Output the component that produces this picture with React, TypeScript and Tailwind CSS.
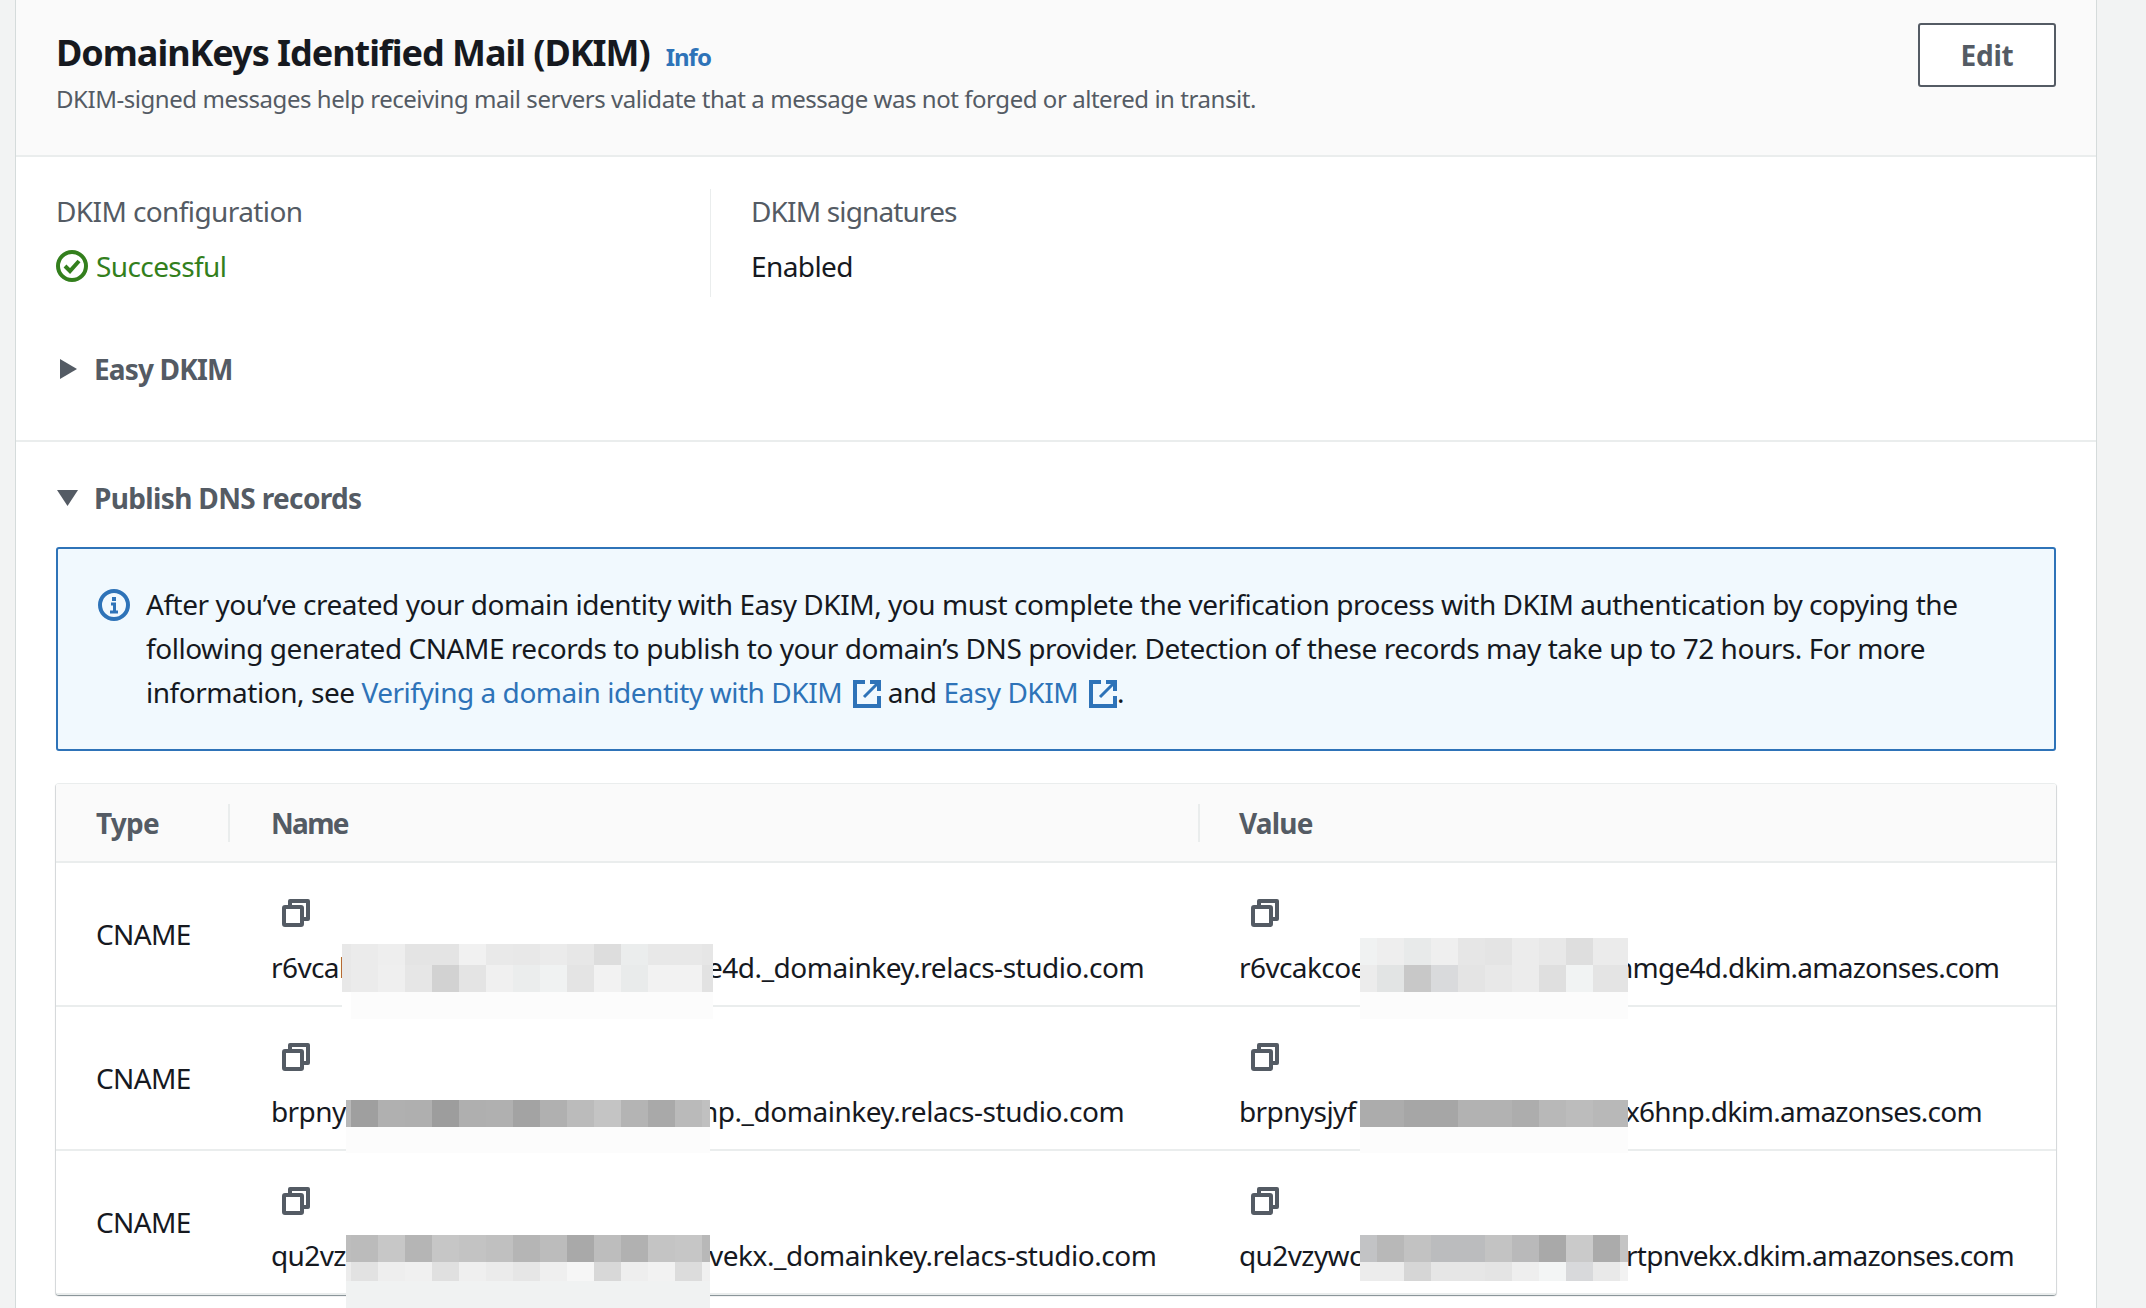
import { ReactNode } from 'react'

// Redacted strips laid over the record names, cell widths then colours per band
const NAME_W = [9, 27, 27, 27, 27, 27, 27, 27, 27, 27, 27, 27, 27, 27, 11]
const VALUE_W = [17, 27, 27, 27, 27, 27, 27, 27, 27, 27, 8]

interface Band {
  y: number
  h: number
  colors: string[]
}

interface MaskProps {
  x: number
  widths: number[]
  bands: Band[]
}

const MASKS: MaskProps[] = [
  {
    x: 342,
    widths: NAME_W,
    bands: [
      { y: 944, h: 21, colors: ['#e8e8e8', '#ebebeb', '#eeeeee', '#e4e4e4', '#e4e4e4', '#f1f1f1', '#e9e9e9', '#e8e8e8', '#ebebeb', '#e7e7e7', '#dddddd', '#ebeded', '#e8e8e8', '#e8e8e8', '#e6e6e6'] },
      { y: 965, h: 27, colors: ['#e8e8e8', '#ebebeb', '#efefef', '#e6e6e6', '#d2d2d2', '#e4e4e4', '#f0f0f0', '#ebeded', '#f0f2f2', '#e4e4e4', '#f2f2f2', '#e9ebeb', '#f2f2f2', '#f2f2f2', '#e2e2e2'] },
      { y: 992, h: 27, colors: ['#ffffff', '#fcfcfc', '#fcfcfc', '#fcfcfc', '#fcfcfc', '#fcfcfc', '#fcfcfc', '#fcfcfc', '#fcfcfc', '#fcfcfc', '#fcfcfc', '#fcfcfc', '#fcfcfc', '#fcfcfc', '#fcfcfc'] },
    ],
  },
  {
    x: 346,
    widths: [5, 27, 27, 27, 27, 27, 27, 27, 27, 27, 27, 27, 27, 27, 8],
    bands: [
      { y: 1100, h: 27, colors: ['#b8b8b8', '#9f9f9f', '#b0b0b0', '#afafaf', '#9d9d9d', '#afafaf', '#b0b0b0', '#a3a3a3', '#b0b0b0', '#bbbbbb', '#c4c4c4', '#b4b4b4', '#a9a9a9', '#bababa', '#c0c0c0'] },
      { y: 1127, h: 26, colors: Array(15).fill('#fcfcfc') },
    ],
  },
  {
    x: 346,
    widths: [5, 27, 27, 27, 27, 27, 27, 27, 27, 27, 27, 27, 27, 27, 8],
    bands: [
      { y: 1235, h: 27, colors: ['#bdbdbd', '#bbbbbb', '#c7c7c7', '#b5b5b5', '#c6c6c6', '#c3c3c3', '#c0c0c0', '#b5b5b5', '#bcbcbc', '#a9a9a9', '#bdbdbd', '#b1b1b1', '#c4c4c4', '#c6c6c6', '#b8b8b8'] },
      { y: 1262, h: 19, colors: ['#ececec', '#e2e2e2', '#eeeeee', '#f0f0f0', '#e0e0e0', '#efefef', '#ebebeb', '#e6e6e6', '#efefef', '#f6f6f6', '#d8d8d8', '#eeeeee', '#f2f2f2', '#dcdcdc', '#f0f0f0'] },
      { y: 1281, h: 27, colors: Array(15).fill('#f0f2f2') },
    ],
  },
  {
    x: 1360,
    widths: VALUE_W,
    bands: [
      { y: 938, h: 27, colors: ['#f0f2f2', '#eeeeee', '#e8eaea', '#efefef', '#e6e6e6', '#e4e4e4', '#ececec', '#e8e8e8', '#dedede', '#ebebeb', '#ebebeb'] },
      { y: 965, h: 27, colors: ['#ececec', '#e2e4e4', '#c8c8c8', '#d9dadc', '#e4e4e4', '#e8e8e8', '#ececec', '#dfdfdf', '#f1f3f3', '#e4e4e4', '#e4e4e4'] },
      { y: 992, h: 27, colors: Array(11).fill('#fcfcfc') },
    ],
  },
  {
    x: 1360,
    widths: VALUE_W,
    bands: [
      { y: 1100, h: 27, colors: ['#acacac', '#acacac', '#a6a6a6', '#a6a6a6', '#b2b2b2', '#b2b2b2', '#adadad', '#b8b8b8', '#bcbcbc', '#b8b8b8', '#b8b8b8'] },
      { y: 1127, h: 26, colors: Array(11).fill('#fcfcfc') },
    ],
  },
  {
    x: 1360,
    widths: VALUE_W,
    bands: [
      { y: 1235, h: 27, colors: ['#c2c3c5', '#b8b8b8', '#c2c2c2', '#bbbcbe', '#bbbcbe', '#c3c3c3', '#b9b9ba', '#a9a9a9', '#cacaca', '#ababab', '#c4c4c4'] },
      { y: 1262, h: 19, colors: ['#ececec', '#ececec', '#d6d6d6', '#e6e6e6', '#e6e6e6', '#e4e4e4', '#eeeeee', '#f3f5f5', '#d8d9db', '#e9e9e9', '#f2f2f2'] },
    ],
  },
]

const RECORDS = [
  {
    namePre: 'r6vcal',
    nameSuf: 'e4d._domainkey.relacs-studio.com',
    nameWidth: 'w-[436px]',
    valuePre: 'r6vcakcoe',
    valueSuf: 'nmge4d.dkim.amazonses.com',
    valueWidth: 'w-[377px]',
  },
  {
    namePre: 'brpnys',
    nameSuf: 'np._domainkey.relacs-studio.com',
    nameWidth: 'w-[430px]',
    valuePre: 'brpnysjyf',
    valueSuf: 'x6hnp.dkim.amazonses.com',
    valueWidth: 'w-[386px]',
  },
  {
    namePre: 'qu2vz',
    nameSuf: 'vekx._domainkey.relacs-studio.com',
    nameWidth: 'w-[438px]',
    valuePre: 'qu2vzywc',
    valueSuf: 'rtpnvekx.dkim.amazonses.com',
    valueWidth: 'w-[387px]',
  },
]

function Mask({ x, widths, bands }: MaskProps) {
  return (
    <>
      {bands.map((band) => (
        <div key={band.y} className="absolute flex" style={{ left: x, top: band.y, height: band.h }}>
          {band.colors.map((color, i) => (
            <div key={i} className="h-full" style={{ width: widths[i], backgroundColor: color }} />
          ))}
        </div>
      ))}
    </>
  )
}

function CopyIcon({ offset }: { offset: string }) {
  return (
    <svg className={offset} width="28" height="28" viewBox="0 0 28 28" fill="none" stroke="#545b64" strokeWidth="4" strokeLinejoin="round">
      <rect x="2" y="8" width="18" height="18" rx="1" />
      <path d="M8 7V2h18v18h-5" />
    </svg>
  )
}

function ExternalIcon() {
  return (
    <svg className="ml-[4px] inline-block align-[-5px]" width="28" height="28" viewBox="0 0 28 28" fill="none" stroke="#2e73b8" strokeWidth="4">
      <path d="M12 2H2v24h24V16" />
      <path d="M11 17 25 3" strokeWidth="3" />
      <path d="M17 2h9v9" />
    </svg>
  )
}

function Link({ children }: { children: ReactNode }) {
  return <span className="text-[#2e73b8]">{children}</span>
}

interface RecordCellProps {
  pre: string
  suf: string
  preWidth: string
  pad: string
  sufTracking: string
  iconOffset: string
}

function RecordCell({ pre, suf, preWidth, pad, sufTracking, iconOffset }: RecordCellProps) {
  return (
    <td className={`h-[144px] pt-[36px] ${pad} align-top border-b-2 border-[#eaeded]`}>
      <CopyIcon offset={iconOffset} />
      <div className="mt-[18px] flex leading-[44px] whitespace-nowrap">
        <span className={`${preWidth} overflow-hidden`}>{pre}</span>
        <span className={sufTracking}>{suf}</span>
      </div>
    </td>
  )
}

export default function App() {
  return (
    <div
      className="relative h-[1308px] w-[2146px] overflow-hidden bg-[#f2f3f3] text-[28px] tracking-[-0.6px] text-[#16191f]"
      style={{ fontFamily: '"Noto Sans", sans-serif' }}
    >
      <div className="ml-[15px] h-[1308px] w-[2082px] border-x border-[#d5dbdb] bg-white">
        {/* Header */}
        <div className="flex h-[157px] justify-between border-b-2 border-[#eaeded] bg-[#fafafa] pl-[40px] pr-[40px] pt-[23px]">
          <div>
            <div className="flex items-baseline gap-[16px] pt-[6px]">
              <h2 className="text-[36px] font-bold leading-[48px] tracking-[-1.03px]">DomainKeys Identified Mail (DKIM)</h2>
              <span className="text-[24px] font-bold tracking-[-1px] text-[#2e73b8]">Info</span>
            </div>
            <p className="mt-[2px] text-[24px] leading-[40px] tracking-[-0.45px] text-[#545b64]">
              DKIM-signed messages help receiving mail servers validate that a message was not forged or altered in transit.
            </p>
          </div>
          <button className="h-[64px] w-[138px] rounded-[3px] border-2 border-[#545b64] bg-white font-bold tracking-[-0.2px] text-[#545b64]">
            Edit
          </button>
        </div>

        {/* Configuration */}
        <div className="h-[285px] border-b-2 border-[#eaeded] pl-[40px] pr-[40px] pt-[32px]">
          <div className="flex h-[108px]">
            <div className="w-[655px] border-r border-[#eaeded]">
              <div className="pb-[11px] leading-[44px] text-[#545b64]">DKIM configuration</div>
              <div className="flex items-center gap-[8px] leading-[44px] text-[#337f1d]">
                <svg width="32" height="32" viewBox="0 0 32 32" fill="none" stroke="#337f1d" strokeWidth="4">
                  <circle cx="16" cy="16" r="14" />
                  <path d="m9 16 5 5 9-10" />
                </svg>
                Successful
              </div>
            </div>
            <div className="pl-[40px]">
              <div className="pb-[11px] leading-[44px] tracking-[-0.85px] text-[#545b64]">DKIM signatures</div>
              <div className="leading-[44px]">Enabled</div>
            </div>
          </div>
          <div className="mt-[50px] flex items-center gap-[17px] font-bold leading-[44px] tracking-[-0.85px] text-[#545b64]">
            <svg className="ml-[4px]" width="17" height="20" viewBox="0 0 17 20" fill="#545b64">
              <path d="M0 0l17 10L0 20z" />
            </svg>
            Easy DKIM
          </div>
        </div>

        {/* Publish DNS records */}
        <div className="pl-[40px] pr-[40px]">
          <div className="flex items-center gap-[16px] pt-[34px] font-bold leading-[44px] tracking-[-0.65px] text-[#545b64]">
            <svg className="ml-[1px]" width="21" height="16" viewBox="0 0 21 16" fill="#545b64">
              <path d="M0 0h21L10.5 16z" />
            </svg>
            Publish DNS records
          </div>

          <div className="mt-[27px] flex h-[204px] gap-[16px] rounded-[3px] border-2 border-[#2e73b8] bg-[#f1f9fe] pl-[40px] pt-[33px]">
            <svg className="mt-[7px] shrink-0" width="32" height="32" viewBox="0 0 32 32" fill="none" stroke="#2e73b8" strokeWidth="4">
              <circle cx="16" cy="16" r="14" />
              <path d="M16 8v4" />
              <path d="M13 15h3.5v7M12 23h8" strokeWidth="3" />
            </svg>
            <p className="w-[1850px] leading-[44px] tracking-[-0.46px]">
              After you’ve created your domain identity with Easy DKIM, you must complete the verification process with DKIM authentication by copying the following generated CNAME records to publish to your domain’s DNS provider. Detection of these records may take up to 72 hours. For more information, see{' '}
              <Link>Verifying a domain identity with DKIM</Link> <ExternalIcon /> and <Link>Easy DKIM</Link> <ExternalIcon />.
            </p>
          </div>

          <div className="mt-[32px] overflow-hidden rounded-[3px] border-t border-[#eaeded] bg-white shadow-[0_1px_1px_0_rgba(0,28,36,0.3),1px_1px_1px_0_rgba(0,28,36,0.15),-1px_1px_1px_0_rgba(0,28,36,0.15)]">
            <table className="w-full table-fixed border-collapse">
              <colgroup>
                <col className="w-[172px]" />
                <col className="w-[970px]" />
                <col />
              </colgroup>
              <thead>
                <tr className="h-[78px] border-b-2 border-[#eaeded] bg-[#fafafa] text-left text-[#545b64]">
                  <th className="pl-[40px] font-bold tracking-[-0.8px]">Type</th>
                  <th className="font-bold tracking-[-1.7px]">
                    <div className="border-l-2 border-[#eaeded] pl-[41px] leading-[38px]">Name</div>
                  </th>
                  <th className="font-bold tracking-[-0.8px]">
                    <div className="border-l-2 border-[#eaeded] pl-[39px] leading-[38px]">Value</div>
                  </th>
                </tr>
              </thead>
              <tbody>
                {RECORDS.map((r) => (
                  <tr key={r.namePre}>
                    <td className="pl-[40px] align-middle border-b-2 border-[#eaeded]">CNAME</td>
                    <RecordCell pre={r.namePre} suf={r.nameSuf} preWidth={r.nameWidth} pad="pl-[43px]" sufTracking="tracking-[-0.47px]" iconOffset="ml-[11px]" />
                    <RecordCell pre={r.valuePre} suf={r.valueSuf} preWidth={r.valueWidth} pad="pl-[41px]" sufTracking="tracking-[-0.75px]" iconOffset="ml-[12px]" />
                  </tr>
                ))}
              </tbody>
            </table>
          </div>
        </div>
      </div>

      {MASKS.map((mask, i) => (
        <Mask key={i} {...mask} />
      ))}
    </div>
  )
}
